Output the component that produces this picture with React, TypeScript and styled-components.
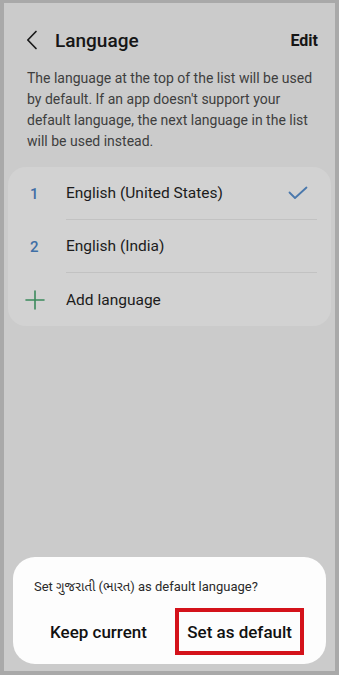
import React from "react";
import styled, { createGlobalStyle } from "styled-components";

const GlobalStyle = createGlobalStyle`
  html, body {
    margin: 0;
    padding: 0;
    background: #a9a9a9;
  }
  * {
    box-sizing: border-box;
  }
  body {
    font-family: Roboto, "Noto Sans", "Noto Sans Gujarati", "Liberation Sans", sans-serif;
  }
`;

const Frame = styled.div`
  width: 339px;
  height: 675px;
  padding: 3px 4px 4px 4px;
  background: #a9a9a9;
`;

const Screen = styled.div`
  height: 100%;
  background: #cbcbcb;
  display: flex;
  flex-direction: column;
  padding: 0 4px 7px 4px;
`;

const Header = styled.header`
  display: flex;
  align-items: center;
  height: 56px;
  margin-top: 9px;
  padding: 0 13px 0 18px;
`;

const BackButton = styled.button`
  border: none;
  background: none;
  padding: 0;
  width: 14px;
  height: 24px;
  display: flex;
  align-items: center;
  margin-right: 15px;
`;

const Title = styled.h1`
  flex: 1;
  margin: 0;
  font-size: 19px;
  font-weight: 500;
  color: #161616;
`;

const EditButton = styled.button`
  border: none;
  background: none;
  padding: 0;
  font-family: inherit;
  font-size: 16px;
  font-weight: 700;
  color: #161616;
`;

const Description = styled.p`
  margin: 0;
  padding: 0 14px 0 19px;
  font-size: 14px;
  line-height: 21px;
  color: #3e3e3e;
`;

const ListCard = styled.ul`
  list-style: none;
  margin: 15px 0 0 0;
  padding: 0 14px 0 0;
  background: #d2d2d2;
  border-radius: 18px;
`;

const Row = styled.li`
  display: flex;
  align-items: center;
  height: 53px;
`;

const Lead = styled.span<{ $color: string; $icon?: boolean }>`
  width: 58px;
  padding-left: ${({ $icon }) => ($icon ? "17px" : "22px")};
  font-size: 15px;
  font-weight: 500;
  color: ${({ $color }) => $color};
  display: flex;
  align-items: center;
`;

const RowBody = styled.div<{ $divider?: boolean }>`
  flex: 1;
  height: 100%;
  display: flex;
  align-items: center;
  justify-content: space-between;
  border-bottom: ${({ $divider }) => ($divider ? "1px solid #c2c2c2" : "none")};
  padding-right: 9px;
`;

const RowLabel = styled.span`
  font-size: 15.5px;
  color: #1c1c1c;
`;

const Spacer = styled.div`
  flex: 1;
`;

const Dialog = styled.div`
  margin: 0 5px;
  background: #fdfdfd;
  border-radius: 22px;
  padding: 22px 18px 9px 21px;
`;

const DialogText = styled.p`
  margin: 0;
  font-size: 13px;
  color: #2a2a2a;
`;

const DialogActions = styled.div`
  display: flex;
  align-items: center;
  justify-content: space-between;
  margin-top: 12px;
  padding: 0 4px 0 12px;
`;

const ActionButton = styled.button<{ $highlight?: boolean }>`
  border: ${({ $highlight }) => ($highlight ? "4px solid #d4121b" : "4px solid transparent")};
  background: none;
  font-family: inherit;
  font-size: 17px;
  font-weight: 500;
  color: #111;
  height: 47px;
  padding: 0 ${({ $highlight }) => ($highlight ? "8px" : "0")};
`;

const BackIcon = () => (
  <svg width="12" height="20" viewBox="0 0 12 20" fill="none">
    <path d="M10 1.5 L1.8 10 L10 18.5" stroke="#1a1a1a" strokeWidth="1.7" strokeLinecap="round" strokeLinejoin="round" />
  </svg>
);

const CheckIcon = () => (
  <svg width="20" height="14" viewBox="0 0 20 14" fill="none">
    <path d="M1.5 6.5 L7 12 L18.5 1.5" stroke="#4a78ac" strokeWidth="1.8" strokeLinecap="round" strokeLinejoin="round" />
  </svg>
);

const PlusIcon = () => (
  <svg width="20" height="20" viewBox="0 0 20 20" fill="none">
    <path d="M10 1 V19 M1 10 H19" stroke="#3b8a5c" strokeWidth="1.6" strokeLinecap="round" />
  </svg>
);

const languages = [
  { n: 1, name: "English (United States)", selected: true },
  { n: 2, name: "English (India)", selected: false },
];

export default function App() {
  return (
    <>
      <GlobalStyle />
      <Frame>
        <Screen>
          <Header>
            <BackButton aria-label="Back">
              <BackIcon />
            </BackButton>
            <Title>Language</Title>
            <EditButton>Edit</EditButton>
          </Header>
          <Description>
            The language at the top of the list will be used by default. If an app doesn't support your default
            language, the next language in the list will be used instead.
          </Description>
          <ListCard>
            {languages.map((l) => (
              <Row key={l.n}>
                <Lead $color="#3f6fa6">{l.n}</Lead>
                <RowBody $divider>
                  <RowLabel>{l.name}</RowLabel>
                  {l.selected && <CheckIcon />}
                </RowBody>
              </Row>
            ))}
            <Row>
              <Lead $color="#3b8a5c" $icon>
                <PlusIcon />
              </Lead>
              <RowBody>
                <RowLabel>Add language</RowLabel>
              </RowBody>
            </Row>
          </ListCard>
          <Spacer />
          <Dialog>
            <DialogText>Set ગુજરાતી (ભારત) as default language?</DialogText>
            <DialogActions>
              <ActionButton>Keep current</ActionButton>
              <ActionButton $highlight>Set as default</ActionButton>
            </DialogActions>
          </Dialog>
        </Screen>
      </Frame>
    </>
  );
}
